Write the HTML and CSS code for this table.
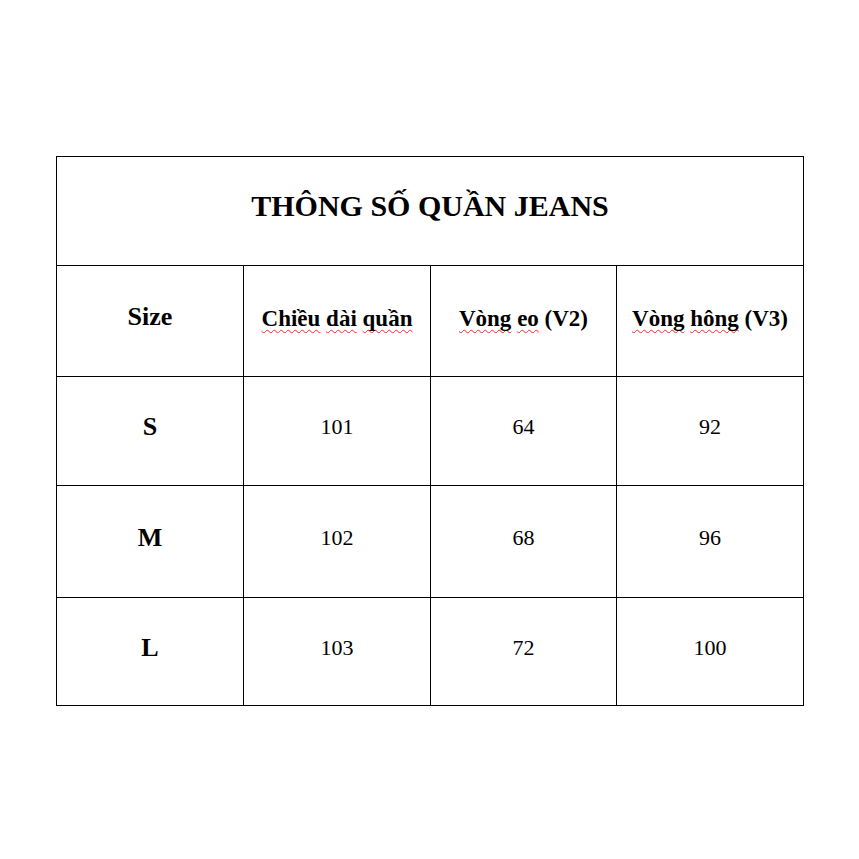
FILE: index.html
```html
<!DOCTYPE html>
<html lang="vi">
<head>
<meta charset="utf-8">
<link rel="stylesheet" href="styles.css">
</head>
<body>
<div class="page">
<table class="spec">
  <colgroup>
    <col class="c1"><col class="c2"><col class="c3"><col class="c4">
  </colgroup>
  <tr class="r-title"><th colspan="4" class="title">THÔNG SỐ QUẦN JEANS</th></tr>
  <tr class="r-head">
    <th class="size">Size</th>
    <th class="head"><span class="sp">Chiều</span> <span class="sp">dài</span> <span class="sp">quần</span></th>
    <th class="head"><span class="sp">Vòng</span> <span class="sp">eo</span> (V2)</th>
    <th class="head"><span class="sp">Vòng</span> <span class="sp">hông</span> (V3)</th>
  </tr>
  <tr class="r1"><th class="size">S</th><td>101</td><td>64</td><td>92</td></tr>
  <tr class="r2"><th class="size">M</th><td>102</td><td>68</td><td>96</td></tr>
  <tr class="r3"><th class="size">L</th><td>103</td><td>72</td><td>100</td></tr>
</table>
</div>
</body>
</html>
```
FILE: styles.css
```css
html, body {
  margin: 0;
  padding: 0;
  background: #fff;
}
.page {
  width: 859px;
  height: 859px;
  padding-top: 156px;
  padding-left: 56px;
  box-sizing: border-box;
}
.spec {
  border-collapse: collapse;
  table-layout: fixed;
  width: 748px;
  font-family: "Liberation Serif", "Times New Roman", serif;
  color: #000;
}
.c1 { width: 187px; }
.c2 { width: 187px; }
.c3 { width: 186px; }
.c4 { width: 187px; }
.spec th, .spec td {
  border: 1px solid #000;
  text-align: center;
  vertical-align: middle;
  padding: 0 0 8px 0;
}
.spec td {
  font-weight: normal;
  font-size: 22px;
}
.r-title { height: 109px; }
.r-head { height: 111px; }
.r1 { height: 109px; }
.r2 { height: 112px; }
.r3 { height: 108px; }
.title {
  font-size: 30px;
  font-weight: bold;
}
.spec .r-title .title { padding-bottom: 10px; }
.size {
  font-size: 26px;
  font-weight: bold;
}
.spec .head {
  font-size: 23px;
  font-weight: bold;
  white-space: nowrap;
  padding-bottom: 5px;
}
.sp {
  text-decoration: underline wavy #e0302a;
  text-decoration-thickness: 1.3px;
  text-underline-offset: 3px;
  text-decoration-skip-ink: none;
}
```
